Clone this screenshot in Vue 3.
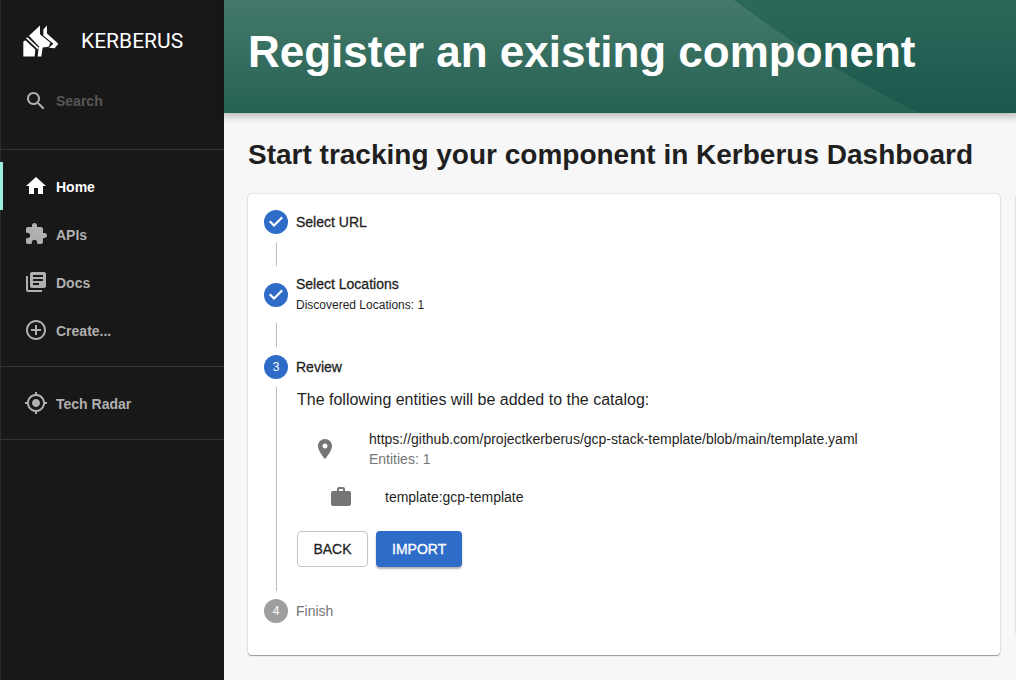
<script setup>
import { ref } from 'vue'

const query = ref('')

const icons = {
  home: 'M10 20v-6h4v6h5v-8h3L12 3 2 12h3v8z',
  extension: 'M20.5 11H19V7c0-1.1-.9-2-2-2h-4V3.5C13 2.12 11.88 1 10.5 1S8 2.12 8 3.5V5H4c-1.1 0-1.99.9-1.99 2v3.8H3.5c1.49 0 2.7 1.21 2.7 2.7s-1.21 2.7-2.7 2.7H2V20c0 1.1.9 2 2 2h3.8v-1.5c0-1.49 1.21-2.7 2.7-2.7 1.49 0 2.7 1.21 2.7 2.7V22H17c1.1 0 2-.9 2-2v-4h1.5c1.38 0 2.5-1.12 2.5-2.5S21.88 11 20.5 11z',
  docs: 'M4 6H2v14c0 1.1.9 2 2 2h14v-2H4V6zm16-4H8c-1.1 0-2 .9-2 2v12c0 1.1.9 2 2 2h12c1.1 0 2-.9 2-2V4c0-1.100-.9-2-2-2zm-1 9H9V9h10v2zm-4 4H9v-2h6v2zm4-8H9V5h10v2z',
  create: 'M13 7h-2v4H7v2h4v4h2v-4h4v-2h-4V7zm-1-5C6.480 2 2 6.480 2 12s4.480 10 10 10 10-4.480 10-10S17.520 2 12 2zm0 18c-4.410 0-8-3.590-8-8s3.590-8 8-8 8 3.590 8 8-3.590 8-8 8z',
  radar: 'M12 8c-2.210 0-4 1.790-4 4s1.790 4 4 4 4-1.790 4-4-1.790-4-4-4zm8.940 3c-.46-4.170-3.770-7.480-7.940-7.940V1h-2v2.060C6.830 3.520 3.520 6.830 3.060 11H1v2h2.060c.46 4.170 3.770 7.480 7.940 7.940V23h2v-2.060c4.170-.46 7.480-3.770 7.940-7.940H23v-2h-2.060zM12 19c-3.870 0-7-3.130-7-7s3.130-7 7-7 7 3.130 7 7-3.130 7-7 7z',
}

const groups = [
  [
    { label: 'Home', icon: icons.home, active: true },
    { label: 'APIs', icon: icons.extension },
    { label: 'Docs', icon: icons.docs },
    { label: 'Create...', icon: icons.create },
  ],
  [{ label: 'Tech Radar', icon: icons.radar }],
]
</script>

<template>
  <div class="app">
    <aside class="sidebar">
      <a class="brand" href="#">
        <svg class="brand-mark" viewBox="71 74 108 95" aria-hidden="true">
          <path d="M72 168V124L78 119L108 147L106 168Z" />
          <path d="M80 113L84 110L118 142L116 147Z" />
          <path d="M89 106L122 75V101L153 127L148 139L130 141L126 168H115L118 141L120 139Z" />
          <path d="M132 87L143 75V99L177 130L166 143L149 142L162 130L132 105Z" />
        </svg>
        <span class="brand-name">KERBERUS</span>
      </a>
      <label class="search">
        <svg class="icon" viewBox="0 0 24 24" aria-hidden="true">
          <path d="M15.500 14h-.79l-.28-.27C15.410 12.590 16 11.110 16 9.500 16 5.910 13.090 3 9.500 3S3 5.910 3 9.500 5.910 16 9.500 16c1.610 0 3.090-.59 4.230-1.570l.27.28v.79l5 4.990L20.490 19l-4.990-5zm-6 0C7.010 14 5 11.990 5 9.500S7.010 5 9.500 5 14 7.010 14 9.500 11.990 14 9.500 14z" />
        </svg>
        <input v-model="query" type="search" placeholder="Search" aria-label="Search" />
      </label>
      <nav v-for="(group, i) in groups" :key="i" class="group">
        <a v-for="item in group" :key="item.label" href="#" class="item" :class="{ active: item.active }">
          <svg class="icon" viewBox="0 0 24 24" aria-hidden="true"><path :d="item.icon" /></svg>
          <span class="item-label">{{ item.label }}</span>
        </a>
      </nav>
    </aside>

    <div class="page">
      <header class="header">
        <svg class="wave" viewBox="0 0 792 113" preserveAspectRatio="none" aria-hidden="true">
          <defs>
            <linearGradient id="wave-fill" x1="0" y1="0" x2="0" y2="1">
              <stop offset="0" stop-color="#44796b" />
              <stop offset="1" stop-color="#266253" />
            </linearGradient>
          </defs>
          <path d="M0 0H510Q592 62 695 113H0Z" fill="url(#wave-fill)" />
        </svg>
        <h1>Register an existing component</h1>
      </header>

      <main class="content">
        <h2>Start tracking your component in Kerberus Dashboard</h2>
        <div class="cards">
          <section class="card">
            <ol class="stepper">
              <li>
                <div class="step">
                  <svg class="icon done" viewBox="0 0 24 24" aria-hidden="true">
                    <path d="M12 0a12 12 0 1 0 0 24 12 12 0 0 0 0-24zm-2 17l-5-5 1.500-1.500 3.500 3.500 7.500-7.500L19 8l-9 9z" />
                  </svg>
                  <div class="step-label">Select URL</div>
                </div>
                <div class="connector"></div>
              </li>
              <li>
                <div class="step">
                  <svg class="icon done" viewBox="0 0 24 24" aria-hidden="true">
                    <path d="M12 0a12 12 0 1 0 0 24 12 12 0 0 0 0-24zm-2 17l-5-5 1.500-1.500 3.500 3.500 7.500-7.500L19 8l-9 9z" />
                  </svg>
                  <div>
                    <div class="step-label">Select Locations</div>
                    <div class="caption">Discovered Locations: 1</div>
                  </div>
                </div>
                <div class="connector"></div>
              </li>
              <li>
                <div class="step">
                  <span class="number">3</span>
                  <div class="step-label">Review</div>
                </div>
                <div class="connector review">
                  <p class="lead">The following entities will be added to the catalog:</p>
                  <ul class="entities">
                    <li class="entity">
                      <svg class="icon" viewBox="0 0 24 24" aria-hidden="true">
                        <path d="M12 2C8.130 2 5 5.130 5 9c0 5.250 7 13 7 13s7-7.750 7-13c0-3.870-3.130-7-7-7zm0 9.500c-1.380 0-2.500-1.120-2.500-2.500s1.120-2.500 2.500-2.500 2.500 1.120 2.500 2.500-1.120 2.500-2.500 2.500z" />
                      </svg>
                      <div>
                        <div>https://github.com/projectkerberus/gcp-stack-template/blob/main/template.yaml</div>
                        <div class="muted">Entities: 1</div>
                      </div>
                    </li>
                    <li class="entity nested">
                      <svg class="icon" viewBox="0 0 24 24" aria-hidden="true">
                        <path d="M20 6h-4V4c0-1.110-.89-2-2-2h-4c-1.110 0-2 .89-2 2v2H4c-1.110 0-2 .89-2 2v11c0 1.110.89 2 2 2h16c1.110 0 2-.89 2-2V8c0-1.110-.89-2-2-2zm-6 0h-4V4h4v2z" />
                      </svg>
                      <div>template:gcp-template</div>
                    </li>
                  </ul>
                  <div class="actions">
                    <button type="button" class="button outlined">BACK</button>
                    <button type="button" class="button primary">IMPORT</button>
                  </div>
                </div>
              </li>
              <li>
                <div class="step">
                  <span class="number pending">4</span>
                  <div class="muted">Finish</div>
                </div>
              </li>
            </ol>
          </section>
          <section class="card aside"></section>
        </div>
      </main>
    </div>
  </div>
</template>

<style>
body {
  margin: 0;
}
</style>

<style scoped>
* {
  box-sizing: border-box;
}
.app {
  display: flex;
  min-height: 100vh;
  background: #f7f7f7;
  color: #1f1f1f;
  font: 14px/20px "Liberation Sans", Arial, sans-serif;
}
.icon {
  width: 24px;
  height: 24px;
  flex: none;
  fill: currentColor;
}
.sidebar {
  flex: 0 0 224px;
  background: #181818;
  border-left: 1px solid #2c2c2c;
  color: #b0b0b0;
  font-weight: 700;
}
.brand {
  display: flex;
  align-items: center;
  gap: 22px;
  height: 82px;
  padding-left: 22px;
  color: #fff;
  text-decoration: none;
}
.brand-mark {
  width: 36px;
  height: 32px;
  fill: #fff;
}
.brand-name {
  font: 400 21px/24px Roboto, sans-serif;
}
.search {
  display: flex;
  align-items: center;
  gap: 8px;
  height: 38px;
  margin-bottom: 29px;
  padding-left: 23px;
}
.search input {
  width: 144px;
  padding: 0;
  border: 0;
  outline: 0;
  background: transparent;
  color: #b0b0b0;
  font: inherit;
}
.search input::placeholder {
  color: #565656;
  opacity: 1;
}
.group {
  padding: 12px 0;
  border-top: 1px solid #343434;
}
.group:last-child {
  border-bottom: 1px solid #343434;
}
.item {
  display: flex;
  align-items: center;
  gap: 8px;
  height: 48px;
  margin-left: -1px;
  padding-left: 24px;
  color: inherit;
  text-decoration: none;
}
.item.active {
  padding-left: 21px;
  border-left: 3px solid #9bf0e1;
  color: #fff;
}
.item-label {
  padding-top: 2px;
}
.page {
  flex: 1;
  min-width: 0;
}
.header {
  position: relative;
  display: flex;
  align-items: center;
  height: 113px;
  padding: 0 24px 10px;
  background: linear-gradient(#2d695b, #1a584b);
  box-shadow: 0 0 8px 3px rgba(20, 20, 20, 0.3);
  color: #fff;
}
.wave {
  position: absolute;
  inset: 0;
  width: 100%;
  height: 100%;
}
h1 {
  position: relative;
  margin: 0;
  font-size: 44px;
  line-height: 52px;
  white-space: nowrap;
}
.content {
  padding: 24px 16px 24px 24px;
  overflow: hidden;
}
h2 {
  margin: 0 0 21px;
  font-size: 28px;
  line-height: 36px;
  white-space: nowrap;
}
.cards {
  display: grid;
  grid-template-columns: 100% 300px;
  gap: 16px;
}
.card {
  padding: 16px 16px 32px;
  border-radius: 4px;
  background: #fff;
  box-shadow: 0 1px 1px rgba(0, 0, 0, 0.36), 0 0 2px rgba(0, 0, 0, 0.2);
}
.aside {
  margin-bottom: 20px;
}
.stepper,
.entities {
  margin: 0;
  padding: 0;
  list-style: none;
}
.step {
  display: flex;
  align-items: center;
  gap: 8px;
}
.step-label,
.button {
  -webkit-text-stroke: 0.3px currentColor;
}
.done {
  fill: #2e6cc7;
}
.number {
  display: grid;
  place-items: center;
  width: 24px;
  height: 24px;
  border-radius: 50%;
  background: #2e6cc7;
  color: #fff;
  font-size: 12px;
}
.number.pending {
  background: #9e9e9e;
}
.caption {
  margin-top: 1px;
  font-size: 12px;
  line-height: 20px;
}
.connector {
  min-height: 24px;
  margin: 8px 0 8px 12px;
  border-left: 1px solid #bdbdbd;
}
.review {
  padding: 0 0 24px 20px;
}
.lead {
  margin: 0 0 16px;
  font-size: 16px;
  line-height: 26px;
}
.entity {
  display: flex;
  align-items: center;
  gap: 32px;
  padding-left: 16px;
}
.entity .icon {
  color: #757575;
}
.nested {
  padding: 16px 0 22px 32px;
}
.muted {
  color: #757575;
}
.actions {
  display: flex;
  gap: 8px;
}
.button {
  height: 36px;
  min-width: 71px;
  padding: 0 16px;
  border: 0;
  border-radius: 4px;
  font: inherit;
}
.outlined {
  padding: 0 15px;
  border: 1px solid #c4c4c4;
  background: #fff;
  color: #1f1f1f;
}
.primary {
  background: #2e6cc7;
  box-shadow: 0 2px 2px rgba(0, 0, 0, 0.3);
  color: #fff;
}
</style>
